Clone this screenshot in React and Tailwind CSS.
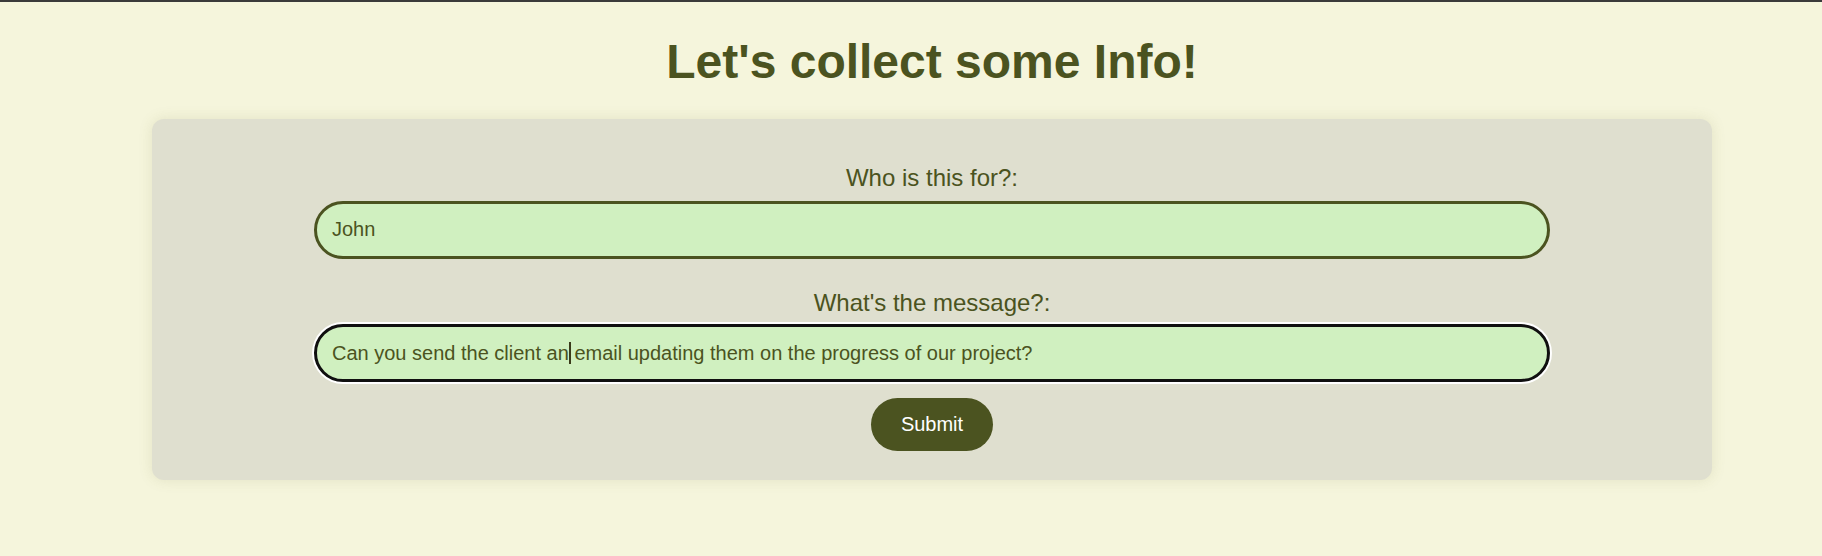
export default function App() {
  const font = { fontFamily: '"Liberation Sans", Arial, sans-serif' };
  return (
    <div className="min-h-[556px] w-full bg-[#f5f5dc]" style={font}>
      <div className="h-[2px] w-full bg-[#3a3a3a]" />
      <div className="pl-[42px]">
        <h1 className="mt-[32px] text-center text-[48px] font-bold leading-[55px] text-[#4b5320]">
          Let's collect some Info!
        </h1>
        <div className="mx-auto mt-[30px] flex h-[361px] w-[1560px] flex-col items-center rounded-[12px] bg-[#dfdfcf] pt-[45px] shadow-[0_0_14px_rgba(120,120,60,0.15)]">
          <label className="mb-[9px] text-[24px] leading-[27.6px] text-[#4b5320]">
            Who is this for?:
          </label>
          <div className="flex h-[58px] w-[1236px] items-center rounded-full border-[3px] border-[#4b5320] bg-[#d0f0c0] pl-[15px] text-[20px] leading-[23px] text-[#4b5320]">
            John
          </div>
          <label className="mb-[8px] mt-[30px] text-[24px] leading-[27.6px] text-[#4b5320]">
            What's the message?:
          </label>
          <div className="flex h-[58px] w-[1236px] items-center whitespace-pre rounded-full border-[3px] border-[#101010] bg-[#d0f0c0] pl-[15px] text-[20px] leading-[23px] text-[#4b5320] shadow-[0_0_0_2px_#ffffff]">
            <span>Can you send the client an</span>
            <span className="mr-[-2px] inline-block h-[22px] w-[2px] bg-[#3a3a1a]" />
            <span>{" email updating them on the progress of our project?"}</span>
          </div>
          <button className="mt-[16px] rounded-full bg-[#4b5320] px-[30px] py-[15px] text-[20px] leading-[23px] text-white">
            Submit
          </button>
        </div>
      </div>
    </div>
  );
}
